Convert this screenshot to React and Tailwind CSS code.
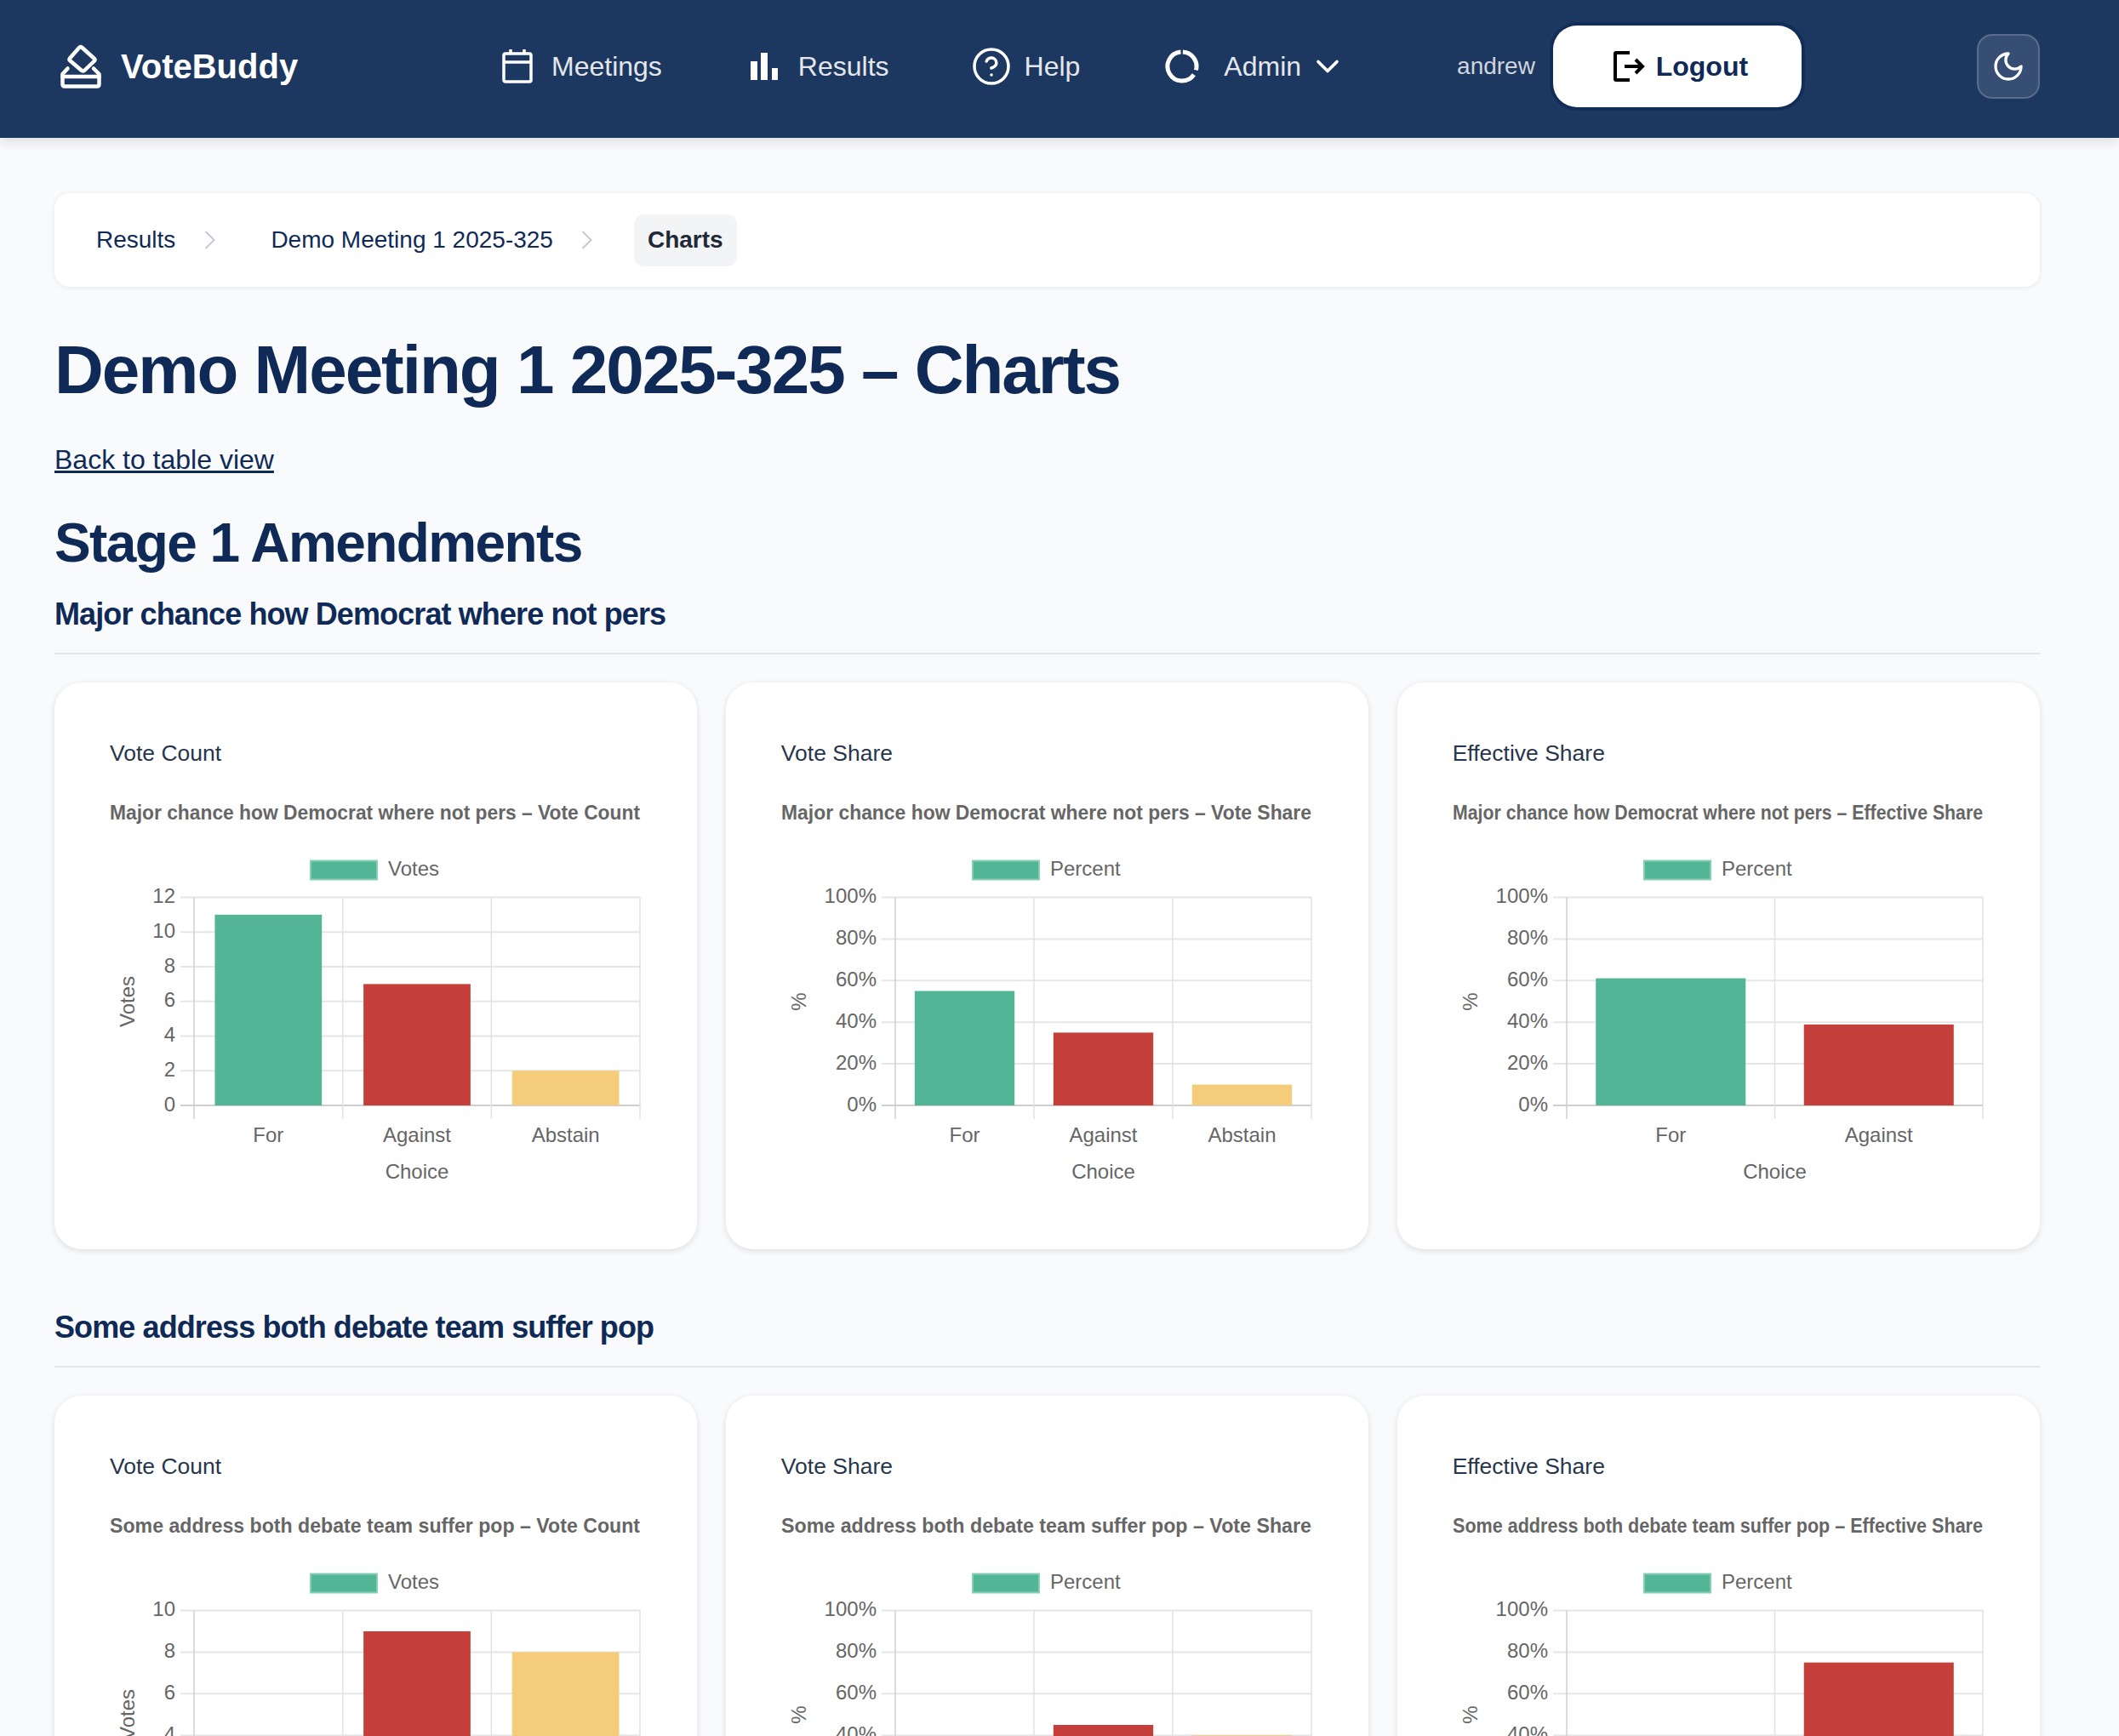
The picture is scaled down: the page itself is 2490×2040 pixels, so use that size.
import { ChevronDown, CircleHelp } from 'lucide-react';

const GREEN = '#52b696';
const RED = '#c53f3a';
const AMBER = '#f5cc7a';
const CHOICE_COLORS = { For: GREEN, Against: RED, Abstain: AMBER };

const WIDTH = 623;
const PLOT_TOP = 129.5;
const PLOT_BOTTOM = 374;

function BarChart({ title, legend, yTitle, ticks, max, suffix = '', left, data }) {
    const plotW = WIDTH - left;
    const catW = plotW / data.length;
    const barW = catW * 0.72;
    const plotH = PLOT_BOTTOM - PLOT_TOP;
    const legendW = 80 + 12 + (legend === 'Votes' ? 61 : 83);
    const legendX = (WIDTH - legendW) / 2;

    return (
        <svg width={WIDTH + 1} height="480" viewBox={`0 0 ${WIDTH + 1} 480`} className="block overflow-visible">
            <text x="0" y="38" fontSize="24" fontWeight="700" fill="#666" textLength={WIDTH} lengthAdjust="spacingAndGlyphs">
                {title}
            </text>

            {/* legend */}
            <rect x={legendX + 1} y="86.5" width="78" height="22" fill={GREEN} stroke="#86cfb6" strokeWidth="2" />
            <text x={legendX + 92} y="104" fontSize="24" fill="#666">{legend}</text>

            {/* grid */}
            {ticks.map((t) => {
                const y = PLOT_BOTTOM - (t / max) * plotH;
                return (
                    <g key={t}>
                        <line x1={left - 16} x2={WIDTH + 0.5} y1={y} y2={y} stroke={t === 0 ? '#cfcfcf' : '#e6e6e6'} strokeWidth="2" />
                        <text x={left - 22} y={y + 6.5} fontSize="24" fill="#666" textAnchor="end">{t}{suffix}</text>
                    </g>
                );
            })}
            {data.map((d, i) => (
                <line key={i} x1={left + catW * i} x2={left + catW * i} y1={PLOT_TOP} y2="390" stroke={i === 0 ? '#cfcfcf' : '#e2e2e2'} strokeWidth="1.5" />
            ))}
            <line x1={WIDTH} x2={WIDTH} y1={PLOT_TOP} y2="390" stroke="#e2e2e2" strokeWidth="1.5" />

            {/* bars */}
            {data.map((d, i) => {
                const h = (d.value / max) * plotH;
                const x = left + catW * i + (catW - barW) / 2;
                return (
                    <rect key={d.label} x={x} y={PLOT_BOTTOM - h} width={barW} height={h} fill={CHOICE_COLORS[d.label]} />
                );
            })}

            {/* labels */}
            {data.map((d, i) => (
                <text key={d.label} x={left + catW * (i + 0.5)} y="417" fontSize="24" fill="#666" textAnchor="middle">{d.label}</text>
            ))}
            <text x={left + plotW / 2} y="460" fontSize="24" fill="#666" textAnchor="middle">Choice</text>
            <text transform="translate(29 252) rotate(-90)" fontSize="24" fill="#666" textAnchor="middle">{yTitle}</text>
        </svg>
    );
}

function ChartCard({ heading, chart }) {
    return (
        <div className="h-[666px] rounded-[32px] bg-white px-[65px] pt-[63px] shadow-[0_2px_7px_rgba(17,24,39,0.12)]">
            <h4 className="mb-[20px] text-[26.5px] leading-[40px] text-[#27364d]">{heading}</h4>
            <BarChart {...chart} />
        </div>
    );
}

function Question({ name, maxVotes, voteTicks, votes, share, effective }) {
    const pctTicks = [0, 20, 40, 60, 80, 100];
    return (
        <section>
            <div className="border-b-2 border-[#e2e5ea] pb-[23px]">
                <h3 className="text-[36px] font-bold leading-[44px] tracking-tight text-[#0f2a57]">{name}</h3>
            </div>
            <div className="mt-[33px] grid grid-cols-3 gap-[33.5px]">
                <ChartCard
                    heading="Vote Count"
                    chart={{ title: `${name} – Vote Count`, legend: 'Votes', yTitle: 'Votes', ticks: voteTicks, max: maxVotes, left: 99, data: votes }}
                />
                <ChartCard
                    heading="Vote Share"
                    chart={{ title: `${name} – Vote Share`, legend: 'Percent', yTitle: '%', ticks: pctTicks, max: 100, suffix: '%', left: 134, data: share }}
                />
                <ChartCard
                    heading="Effective Share"
                    chart={{ title: `${name} – Effective Share`, legend: 'Percent', yTitle: '%', ticks: pctTicks, max: 100, suffix: '%', left: 134, data: effective }}
                />
            </div>
        </section>
    );
}

const LogoIcon = () => (
    <svg width="48" height="52" viewBox="0 0 48 52" fill="none" stroke="white" strokeWidth="4.5" strokeLinejoin="round" strokeLinecap="round">
        <path d="M25 3.5 L40 17 Q41 18 40 19.5 L28 31 Q26.5 32 25 31 L11 19 Q10 18 11 16.5 L22 4 Q23.5 2.5 25 3.5 Z" />
        <path d="M8.5 28.5 L2.5 35 V47 Q2.5 49.5 5 49.5 H43 Q45.5 49.5 45.5 47 V35 L39 28.5" />
        <path d="M2.5 38 H45.5" />
    </svg>
);

const CalendarIcon = () => (
    <svg width="36" height="40" viewBox="0 0 36 40" fill="none" stroke="white" strokeWidth="3.5">
        <rect x="2" y="5" width="32" height="33" rx="2" />
        <path d="M2 15 H34 M10 0 V6 M26 0 V6" />
    </svg>
);

const BarsIcon = () => (
    <svg width="32" height="32" viewBox="0 0 32 32" fill="white">
        <rect x="0" y="10" width="8" height="22" />
        <rect x="12" y="0" width="8" height="32" />
        <rect x="25" y="18" width="7" height="14" />
    </svg>
);

const AdminIcon = () => (
    <svg width="40" height="40" viewBox="0 0 40 40" fill="none" stroke="white" strokeWidth="5">
        <path d="M20.9 3 A17 17 0 0 1 36.4 24.4" />
        <path d="M33.9 29.75 A17 17 0 1 1 18.5 3.06" />
    </svg>
);

const LogoutIcon = () => (
    <svg width="37" height="36" viewBox="0 0 37 36" fill="none" stroke="black" strokeWidth="4">
        <path d="M19 2 H3 Q2 2 2 3 V33 Q2 34 3 34 H19" />
        <path d="M13 18 H34 M26 10 L34 18 L26 26" />
    </svg>
);

const MoonIcon = () => (
    <svg width="40" height="40" viewBox="0 0 24 24" fill="none" stroke="white" strokeWidth="2" strokeLinejoin="round">
        <path d="M12 3a6 6 0 0 0 9 9 9 9 0 1 1-9-9Z" />
    </svg>
);

const Chevron = () => (
    <svg width="13" height="22" viewBox="0 0 13 22" fill="none" stroke="#c2c8d6" strokeWidth="2">
        <path d="M1.5 1 L11.5 11 L1.5 21" />
    </svg>
);

function c(For, Against, Abstain) {
    const rows = [
        { label: 'For', value: For },
        { label: 'Against', value: Against },
    ];
    if (Abstain !== undefined) rows.push({ label: 'Abstain', value: Abstain });
    return rows;
}

export default function App() {
    return (
        <div className="h-[2040px] overflow-hidden bg-[#f9fafc] font-['Liberation_Sans',Arial,sans-serif]">
            {/* Header */}
            <header className="relative flex h-[162px] items-center bg-[#1c3860] pb-[6px] pl-[71px] pr-[93px] shadow-[0_4px_14px_rgba(0,0,0,0.12)]">
                <div className="flex w-[519px] items-center gap-[23px]">
                    <LogoIcon />
                    <span className="text-[40px] font-bold text-white">VoteBuddy</span>
                </div>
                <nav className="flex items-center text-[32px] text-[#e5e7eb]">
                    <a className="flex items-center gap-[22px]">
                        <CalendarIcon />
                        <span>Meetings</span>
                    </a>
                    <a className="ml-[104px] flex items-center gap-[24px]">
                        <BarsIcon />
                        <span>Results</span>
                    </a>
                    <a className="ml-[99px] flex items-center gap-[18px]">
                        <CircleHelp size={48} color="white" strokeWidth={1.75} className="-mx-[3px]" />
                        <span>Help</span>
                    </a>
                    <a className="ml-[100px] flex items-center gap-[29px]">
                        <AdminIcon />
                        <span>Admin</span>
                    </a>
                    <ChevronDown size={44} color="white" strokeWidth={2} className="ml-[9px]" />
                </nav>
                <span className="ml-[130px] text-[28px] text-[#d1d5db]">andrew</span>
                <button className="ml-[21px] flex h-[96px] w-[292px] items-center justify-center gap-[13px] rounded-[28px] bg-white pl-[8px] text-[32px] font-bold text-[#0f2a57] shadow-[0_0_0_4px_rgba(15,42,87,0.7)]">
                    <LogoutIcon />
                    Logout
                </button>
                <button className="ml-auto flex h-[76px] w-[74px] items-center justify-center rounded-[18px] border-2 border-[#5a6d8c] bg-[#364e74]">
                    <MoonIcon />
                </button>
            </header>

            <main className="px-[64px] pr-[93px] pt-[65px]">
                {/* Breadcrumb */}
                <div className="flex h-[110px] items-center rounded-[18px] bg-white pl-[49px] text-[28px] text-[#0f2a57] shadow-[0_1px_6px_rgba(17,24,39,0.08)]">
                    <a>Results</a>
                    <span className="ml-[34px]"><Chevron /></span>
                    <a className="ml-[65px]">Demo Meeting 1 2025-325</a>
                    <span className="ml-[33px]"><Chevron /></span>
                    <span className="ml-[49px] flex h-[61px] items-center rounded-[12px] bg-[#f3f4f6] px-[16px] font-bold text-[#1f2937]">Charts</span>
                </div>

                <h1 className="mt-[53px] text-[80px] font-bold leading-[90px] tracking-tight text-[#0f2a57]">Demo Meeting 1 2025-325 – Charts</h1>
                <a className="mt-[38px] block text-[32px] leading-[44px] text-[#0f2a57] underline">Back to table view</a>
                <h2 className="mt-[40px] text-[64px] font-bold leading-[72px] tracking-tight text-[#0f2a57]">Stage 1 Amendments</h2>

                <div className="mt-[26px] flex flex-col gap-[70px]">
                    <Question
                        name="Major chance how Democrat where not pers"
                        maxVotes={12}
                        voteTicks={[0, 2, 4, 6, 8, 10, 12]}
                        votes={c(11, 7, 2)}
                        share={c(55, 35, 10)}
                        effective={c(61.1, 38.9)}
                    />
                    <Question
                        name="Some address both debate team suffer pop"
                        maxVotes={10}
                        voteTicks={[0, 2, 4, 6, 8, 10]}
                        votes={c(3, 9, 8)}
                        share={c(15, 45, 40)}
                        effective={c(25, 75)}
                    />
                </div>
            </main>
        </div>
    );
}
